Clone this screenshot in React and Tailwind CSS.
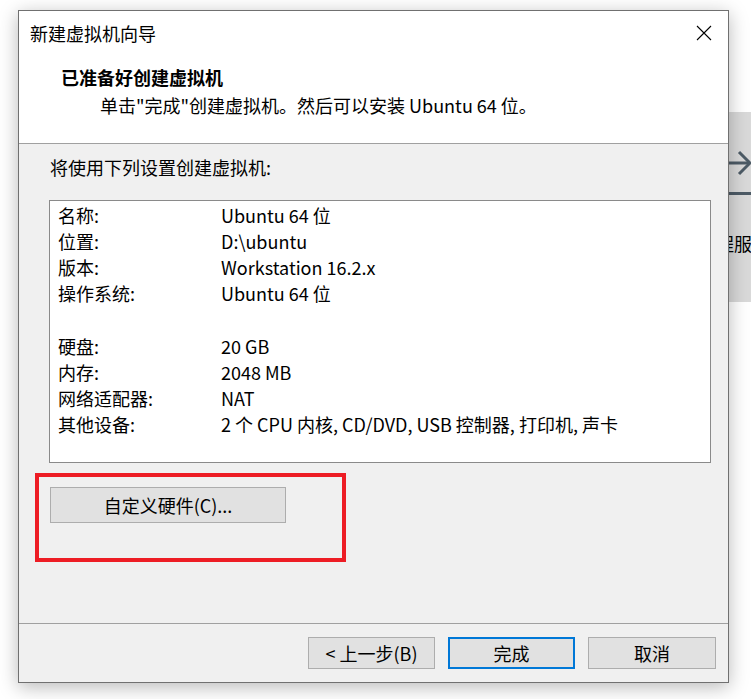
import React from "react";

const rows1 = [
  ["名称:", "Ubuntu 64 位"],
  ["位置:", "D:\\ubuntu"],
  ["版本:", "Workstation 16.2.x"],
  ["操作系统:", "Ubuntu 64 位"],
];
const rows2 = [
  ["硬盘:", "20 GB"],
  ["内存:", "2048 MB"],
  ["网络适配器:", "NAT"],
  ["其他设备:", "2 个 CPU 内核, CD/DVD, USB 控制器, 打印机, 声卡"],
];

function Row({ label, value }) {
  return (
    <div className="flex h-[26px] items-center pl-[8px]">
      <div className="w-[163px] shrink-0">{label}</div>
      <div>{value}</div>
    </div>
  );
}

export default function App() {
  return (
    <div className="relative w-[751px] h-[699px] overflow-hidden bg-white text-[18px] leading-[24px] text-black font-['Noto_Sans_CJK_SC','Noto_Sans',sans-serif]">
      {/* background app window peeking out */}
      <div className="absolute left-[700px] top-[112px] w-[60px] h-[190px] bg-[#d9d9d9]">
        <svg className="absolute left-[29px] top-[38px]" width="24" height="26" viewBox="0 0 24 26">
          <path d="M0 13 H21" stroke="#4d5b66" strokeWidth="3" fill="none" />
          <path d="M10 2 L21 13 L10 24" stroke="#4d5b66" strokeWidth="3" fill="none" />
        </svg>
        <div className="absolute left-[29px] top-[80px] w-[30px] h-[3px] bg-[#4d5b66]" />
        <div className="absolute left-[16px] top-[119px] whitespace-nowrap">程服</div>
      </div>

      {/* dialog */}
      <div className="absolute left-[18px] top-[10px] w-[711px] h-[673px] border border-[#707070] bg-[#f0f0f0] flex flex-col shadow-[0_4px_18px_rgba(0,0,0,0.28)]">
        <div className="bg-white border-b border-[#a0a0a0]">
          <div className="h-[44px] flex items-center justify-between pl-[11px] pr-[16px]">
            <span>新建虚拟机向导</span>
            <svg width="16" height="16" viewBox="0 0 16 16">
              <path d="M1 1 L15 15 M15 1 L1 15" stroke="#000" strokeWidth="1.1" fill="none" />
            </svg>
          </div>
          <div className="h-[88px] pl-[42px] pt-[10px]">
            <div className="font-bold">已准备好创建虚拟机</div>
            <div className="mt-[4px] pl-[39px]">单击"完成"创建虚拟机。然后可以安装 Ubuntu 64 位。</div>
          </div>
        </div>

        <div className="flex-1 flex flex-col">
          <div className="pt-[11px] pl-[31px]">将使用下列设置创建虚拟机:</div>
          <div className="mt-[21px] ml-[30px] mr-[17px] h-[263px] border border-[#8a8a8a] bg-white pt-[1px]">
            {rows1.map(([l, v]) => (
              <Row key={l} label={l} value={v} />
            ))}
            <div className="h-[27px]" />
            {rows2.map(([l, v]) => (
              <Row key={l} label={l} value={v} />
            ))}
          </div>
          <button className="mt-[24px] ml-[31px] w-[236px] h-[36px] bg-[#e1e1e1] border border-[#adadad] flex items-center justify-center">
            自定义硬件(C)...
          </button>
        </div>

        <div className="h-[59px] border-t border-[#a0a0a0] flex justify-end items-start pt-[13px] pr-[12px] gap-[13px]">
          <button className="w-[127px] h-[32px] bg-[#e1e1e1] border border-[#adadad] flex items-center justify-center">
            &lt; 上一步(B)
          </button>
          <button className="w-[127px] h-[32px] bg-[#e1e1e1] border-2 border-[#0078d7] flex items-center justify-center">
            完成
          </button>
          <button className="w-[128px] h-[32px] bg-[#e1e1e1] border border-[#adadad] flex items-center justify-center">
            取消
          </button>
        </div>
      </div>

      {/* red annotation box */}
      <div className="absolute left-[35px] top-[473px] w-[311px] h-[89px] border-4 border-[#ed1c24]" />
    </div>
  );
}
